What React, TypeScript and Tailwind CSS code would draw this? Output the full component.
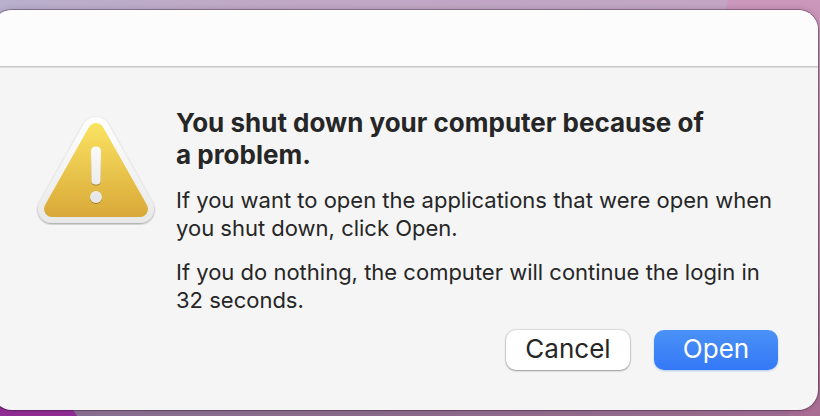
const Wallpaper = () => {
  return (
    <svg
      className="absolute inset-0 w-full h-full"
      viewBox="0 0 820 416"
      preserveAspectRatio="none"
      aria-hidden="true"
    >
      <defs>
        <linearGradient id="sky" x1="0" y1="0" x2="1" y2="0">
          <stop offset="0" stopColor="#b9b0cd" />
          <stop offset="0.3" stopColor="#bfa8c6" />
          <stop offset="1" stopColor="#c3a5c3" />
        </linearGradient>
        <linearGradient id="rose" x1="0" y1="0" x2="0" y2="1">
          <stop offset="0" stopColor="#cb97bb" />
          <stop offset="1" stopColor="#a96d94" />
        </linearGradient>
        <linearGradient id="ground" x1="0" y1="0" x2="1" y2="0">
          <stop offset="0" stopColor="#8a7296" />
          <stop offset="0.5" stopColor="#8d6a8c" />
          <stop offset="1" stopColor="#a26c92" />
        </linearGradient>
      </defs>
      <rect width="820" height="208" fill="url(#sky)" />
      <rect y="208" width="820" height="208" fill="url(#ground)" />
      <path d="M728 0H820V416H790V40H718Z" fill="url(#rose)" />
      <path d="M0 380L60 390L77 416H0Z" fill="#922c96" />
    </svg>
  );
};

const WarningIcon = () => {
  return (
    <svg
      className="w-32 h-32 shrink-0"
      viewBox="0 -1 128 128"
      strokeLinejoin="round"
      role="img"
      aria-label="Warning"
    >
      <defs>
        <linearGradient id="rim" gradientUnits="userSpaceOnUse" x1="0" y1="9" x2="0" y2="115">
          <stop offset="0" stopColor="#ffffff" />
          <stop offset="1" stopColor="#e8e8e8" />
        </linearGradient>
        <linearGradient id="gold" gradientUnits="userSpaceOnUse" x1="0" y1="15" x2="0" y2="109">
          <stop offset="0" stopColor="#fae361" />
          <stop offset="1" stopColor="#d9a838" />
        </linearGradient>
        <linearGradient id="mark" gradientUnits="userSpaceOnUse" x1="0" y1="38" x2="0" y2="95">
          <stop offset="0" stopColor="#fafafa" />
          <stop offset="1" stopColor="#e6e6e6" />
        </linearGradient>
        <filter id="drop" x="-20%" y="-20%" width="140%" height="140%">
          <feDropShadow dx="0" dy="1" stdDeviation="1.2" floodColor="#000" floodOpacity="0.4" />
        </filter>
        <filter id="bevel" x="-30%" y="-20%" width="160%" height="140%">
          <feDropShadow dx="0" dy="1" stdDeviation="0.7" floodColor="#7a5c10" floodOpacity="0.65" />
        </filter>
      </defs>
      <path d="M64 23L108 101H20Z" fill="url(#rim)" stroke="url(#rim)" strokeWidth="28" filter="url(#drop)" />
      <path d="M64 23L108 101H20Z" fill="url(#gold)" stroke="url(#gold)" strokeWidth="16" />
      <g fill="url(#mark)" filter="url(#bevel)">
        <path d="M59 43Q59 38.5 64 38.5T69 43L68.5 73Q68.3 76.5 64 76.5T59.5 73Z" />
        <circle cx="64" cy="89" r="6" />
      </g>
    </svg>
  );
};

const App = () => {
  return (
    <div className="relative min-h-screen flex flex-col pt-[10px] pr-[2px] pb-[6px] overflow-hidden font-['Inter',sans-serif] text-[#262626]">
      <Wallpaper />

      <main className="relative flex-grow -ml-2 rounded-[20px] bg-[#f5f5f5] overflow-hidden shadow-[0_0_0_1px_rgba(50,20,50,0.35),0_0_6px_rgba(0,0,0,0.2)]">
        {/* Title bar */}
        <div className="h-14 bg-[#fcfcfc]" />
        <div className="h-[2px] bg-[#e0e0e0] border-t border-[#c8c8c8]" />

        {/* Content */}
        <div className="flex gap-4 pt-[39px] px-10">
          <WarningIcon />

          <div className="flex-grow">
            <h1 className="text-[26px] leading-8 font-bold">
              You shut down your computer because of a&nbsp;problem.
            </h1>
            <p className="mt-[15px] text-[22px] leading-7">
              If you want to open the applications that were open when you shut down, click Open.
            </p>
            <p className="mt-4 text-[22px] leading-7">
              If you do nothing, the computer will continue the login in 32 seconds.
            </p>

            <div className="flex justify-end gap-6 mt-4">
              <button className="w-31 h-10 pb-[2px] rounded-[10px] bg-white text-[26px] leading-8 shadow-[0_0_1px_1px_rgba(0,0,0,0.1),0_1px_2px_rgba(0,0,0,0.3)]">
                Cancel
              </button>
              <button className="w-31 h-10 pb-[2px] rounded-[10px] bg-linear-to-b from-[#4a91f7] to-[#3478f6] text-[26px] leading-8 text-white shadow-[0_1px_2px_rgba(52,120,246,0.35)]">
                Open
              </button>
            </div>
          </div>
        </div>
      </main>
    </div>
  );
};

export default App;
